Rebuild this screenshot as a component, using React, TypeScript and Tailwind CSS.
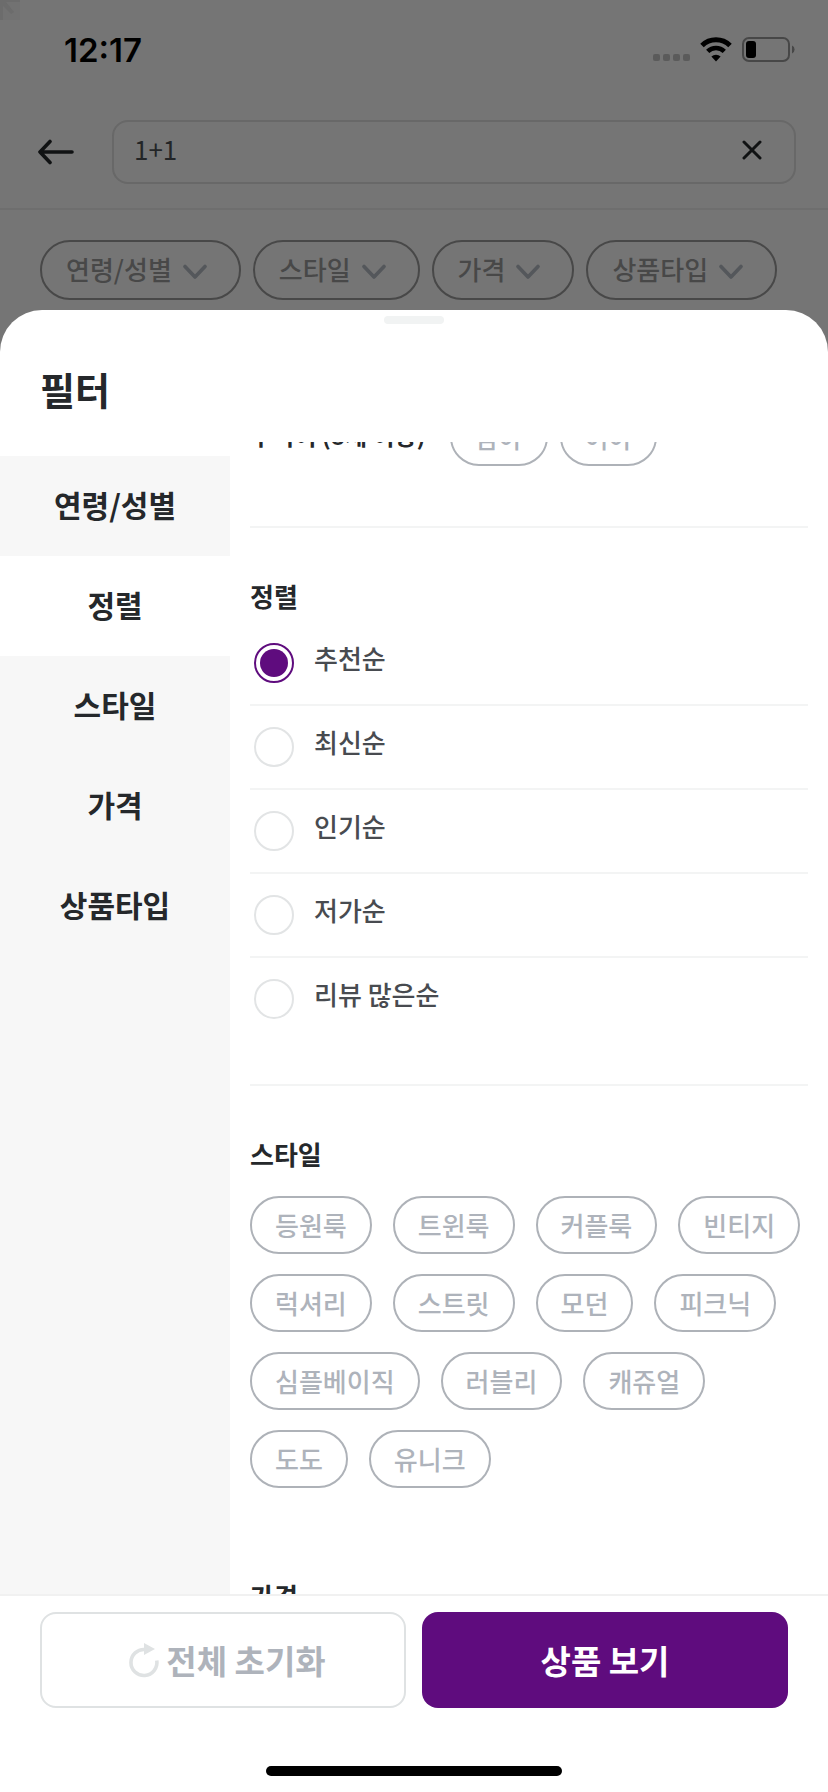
import { ReactNode, useLayoutEffect, useRef, useState } from "react";

type ChipProps = {
  label: string;
  selected: boolean;
  onclick: () => void;
};

type SectionProps = {
  title: string;
  children?: ReactNode;
};

type SortOptionProps = {
  label: string;
  checked: boolean;
  onchange: () => void;
};

const categories = ["연령/성별", "스타일", "가격", "상품타입"];
const menus = ["연령/성별", "정렬", "스타일", "가격", "상품타입"];
const sorts = ["추천순", "최신순", "인기순", "저가순", "리뷰 많은순"];
const styles = [
  "등원룩",
  "트윈룩",
  "커플룩",
  "빈티지",
  "럭셔리",
  "스트릿",
  "모던",
  "피크닉",
  "심플베이직",
  "러블리",
  "캐쥬얼",
  "도도",
  "유니크",
];

export default function App() {
  return (
    <div className="flex h-screen flex-col overflow-hidden bg-[#757575] font-['Noto_Sans_CJK_KR','Noto_Sans',sans-serif]">
      <StatusBar />
      <SearchHeader />
      <FilterSheet />
    </div>
  );
}

function StatusBar() {
  return (
    <div className="relative flex h-25 shrink-0 items-center justify-between pl-16 pr-8">
      <svg className="absolute left-0 top-0" width="20" height="20" viewBox="0 0 20 20" aria-hidden="true">
        <rect width="20" height="20" fill="#727272" />
        <path d="M0 0H20V2H6L14 12L11 14L3 6V20H0Z" fill="#6c6c6c" />
      </svg>
      <time className="font-['Inter',sans-serif] text-[33px] font-semibold leading-8 text-black">12:17</time>
      <div className="flex items-center">
        <svg width="37" height="26" viewBox="0 0 37 26" fill="#5b5b5b" aria-hidden="true">
          <rect x="0" y="17" width="7" height="7" rx="2" />
          <rect x="10" y="17" width="7" height="7" rx="2" />
          <rect x="20" y="17" width="7" height="7" rx="2" />
          <rect x="30" y="17" width="7" height="7" rx="2" />
        </svg>
        <svg className="ml-2.5" width="32" height="26" viewBox="0 0 32 26" fill="none" stroke="#000" aria-hidden="true">
          <path d="M2 8.5A20 20 0 0 1 30 8.5" strokeWidth="5" />
          <path d="M7.7 14.4A12 12 0 0 1 24.3 14.4" strokeWidth="4.6" />
          <path d="M16 24.5L11.4 19.6A6.6 6.6 0 0 1 20.6 19.6Z" fill="#000" stroke="none" />
        </svg>
        <svg className="ml-2.5" width="54" height="26" viewBox="0 0 54 26" fill="none" aria-hidden="true">
          <rect x="1" y="1" width="46" height="23" rx="6" stroke="#474747" strokeWidth="2" />
          <rect x="4" y="4" width="10" height="17" rx="3" fill="#000" />
          <path d="M50 8.5A4.4 4.4 0 0 1 50 16.5Z" fill="#474747" />
        </svg>
      </div>
    </div>
  );
}

function SearchHeader() {
  const [keyword, setKeyword] = useState("1+1");

  return (
    <header className="shrink-0">
      <div className="flex items-center gap-9 border-b-2 border-[#6e6e6e] pb-6 pl-9 pr-8 pt-5">
        <button type="button" aria-label="뒤로">
          <svg width="40" height="26" viewBox="0 0 40 26" fill="none" stroke="#101213" strokeWidth="3.6" strokeLinecap="round" strokeLinejoin="round">
            <path d="M36 13H4M14 2.5L4 13L14 23.5" />
          </svg>
        </button>
        <div className="flex h-16 flex-1 items-center rounded-2xl border-2 border-[#686868] pl-5 pr-8">
          <input
            type="text"
            aria-label="검색어"
            value={keyword}
            onChange={(e) => setKeyword(e.target.value)}
            className="h-11 min-w-0 flex-1 bg-transparent pb-2 text-[26px] leading-9 text-[#232527] outline-none"
          />
          <button type="button" aria-label="지우기" onClick={() => setKeyword("")} className="pb-1">
            <svg width="20" height="20" viewBox="0 0 20 20" fill="none" stroke="#101213" strokeWidth="3" strokeLinecap="round">
              <path d="M2 2L18 18M18 2L2 18" />
            </svg>
          </button>
        </div>
      </div>
      <div className="flex gap-3 overflow-hidden px-10 pb-2.5 pt-7.5">
        {categories.map((category) => (
          <button
            key={category}
            type="button"
            className="flex h-15 shrink-0 items-center gap-2.5 rounded-full border-2 border-[#484848] pb-0.5 pl-6 pr-[31px] text-[26px] font-medium leading-9 text-[#484848]"
          >
            {category}
            <svg className="mt-1.5" width="26" height="16" viewBox="0 0 26 16" fill="none" stroke="#54575b" strokeWidth="3.6" strokeLinecap="round" strokeLinejoin="round">
              <path d="M3 2.5L13 13L23 2.5" />
            </svg>
          </button>
        ))}
      </div>
    </header>
  );
}

function FilterSheet() {
  const [menu, setMenu] = useState("정렬");
  const [sort, setSort] = useState("추천순");
  const [selected, setSelected] = useState<string[]>([]);
  const scrollRef = useRef<HTMLDivElement>(null);
  const ageRef = useRef<HTMLDivElement>(null);

  // open with the sort section in view, the end of the age section just above it
  useLayoutEffect(() => {
    if (scrollRef.current && ageRef.current) {
      scrollRef.current.scrollTop = ageRef.current.offsetHeight - 86;
    }
  }, []);

  const toggle = (label: string) => {
    setSelected((value) =>
      value.includes(label) ? value.filter((item) => item !== label) : [...value, label],
    );
  };

  return (
    <main className="flex min-h-0 flex-1 flex-col overflow-hidden rounded-t-[42px] bg-white">
      <div className="mx-auto mt-1.5 h-2 w-15 shrink-0 rounded-full bg-[#f1f3f3]" />
      <h1 className="shrink-0 px-10 pb-6.5 pt-9.5 text-[38px] font-bold leading-[54px] text-[#25282b]">필터</h1>
      <div className="flex min-h-0 flex-1">
        <nav className="mt-3.5 flex w-[230px] shrink-0 flex-col bg-[#f7f7f7]">
          {menus.map((item) => (
            <button
              key={item}
              type="button"
              onClick={() => setMenu(item)}
              className={`h-25 pb-1 text-[30px] font-bold leading-10 text-[#25282b] ${item === menu ? "bg-white" : ""}`}
            >
              {item}
            </button>
          ))}
        </nav>
        <div ref={scrollRef} className="min-w-0 flex-1 overflow-y-auto pl-5 pr-5 [scrollbar-width:none]">
          <div ref={ageRef} className="flex items-center gap-6 border-b-2 border-[#f3f4f4] pb-15 pt-6">
            <h2 className="pb-1 text-[24px] font-bold leading-9 text-[#25282b]">주니어 (8세 이상)</h2>
            <div className="flex gap-3">
              <Chip label="남아" selected={selected.includes("남아")} onclick={() => toggle("남아")} />
              <Chip label="여아" selected={selected.includes("여아")} onclick={() => toggle("여아")} />
            </div>
          </div>
          <Section title="정렬">
            <div className="border-b-2 border-[#f3f4f4] pb-[42px]">
              {sorts.map((item) => (
                <SortOption key={item} label={item} checked={item === sort} onchange={() => setSort(item)} />
              ))}
            </div>
          </Section>
          <Section title="스타일">
            <div className="flex flex-wrap gap-x-[21px] gap-y-5 pt-4">
              {styles.map((item) => (
                <Chip key={item} label={item} selected={selected.includes(item)} onclick={() => toggle(item)} />
              ))}
            </div>
          </Section>
          <div className="pt-10">
            <Section title="가격" />
          </div>
        </div>
      </div>
      <footer className="shrink-0 border-t-2 border-[#f1f1f1] px-10 pb-4 pt-4">
        <div className="grid grid-cols-2 gap-4">
          <button
            type="button"
            onClick={() => {
              setSort("추천순");
              setSelected([]);
            }}
            className="flex h-24 items-center justify-center gap-1.5 rounded-2xl border-2 border-[#dfe2e3] pl-2 text-[33px] font-bold leading-12 text-[#aeb3bb]"
          >
            <svg width="32" height="36" viewBox="0 0 32 36" fill="none" aria-hidden="true">
              <path d="M17 7.5A13 13 0 1 0 28.8 18.5" stroke="#dfe2e3" strokeWidth="3.6" />
              <path d="M16 1L27 7L16 13Z" fill="#dfe2e3" />
            </svg>
            전체 초기화
          </button>
          <button
            type="button"
            className="h-24 rounded-2xl bg-[#5f0c7e] text-[33px] font-bold leading-12 text-white"
          >
            상품 보기
          </button>
        </div>
        <div className="mx-auto mt-14.5 h-2.5 w-74 rounded-full bg-black" />
      </footer>
    </main>
  );
}

function Section({ title, children }: SectionProps) {
  return (
    <section>
      <h2 className="pt-[50px] text-[26px] font-bold leading-9 text-[#25282b]">{title}</h2>
      <div className="pt-2">{children}</div>
    </section>
  );
}

function SortOption({ label, checked, onchange }: SortOptionProps) {
  return (
    <label className="flex h-21 items-center gap-5 border-b-2 border-[#f3f4f4] px-1 last:border-transparent">
      <input
        type="radio"
        name="sort"
        checked={checked}
        onChange={onchange}
        className="h-10 w-10 shrink-0 appearance-none rounded-full border-2 border-[#e2e4e5] bg-white bg-clip-content p-1 checked:border-[#5f0c7e] checked:bg-[#5f0c7e]"
      />
      <span className="pb-2.5 text-[26px] font-medium leading-9 text-[#484b50]">{label}</span>
    </label>
  );
}

function Chip({ label, selected, onclick }: ChipProps) {
  return (
    <button
      type="button"
      onClick={onclick}
      aria-pressed={selected}
      className={`h-[58px] rounded-full border-2 px-[23px] text-[26px] font-medium leading-9 ${
        selected ? "border-[#5f0c7e] text-[#5f0c7e]" : "border-[#aeb2b8] text-[#aeb3bb]"
      }`}
    >
      {label}
    </button>
  );
}
